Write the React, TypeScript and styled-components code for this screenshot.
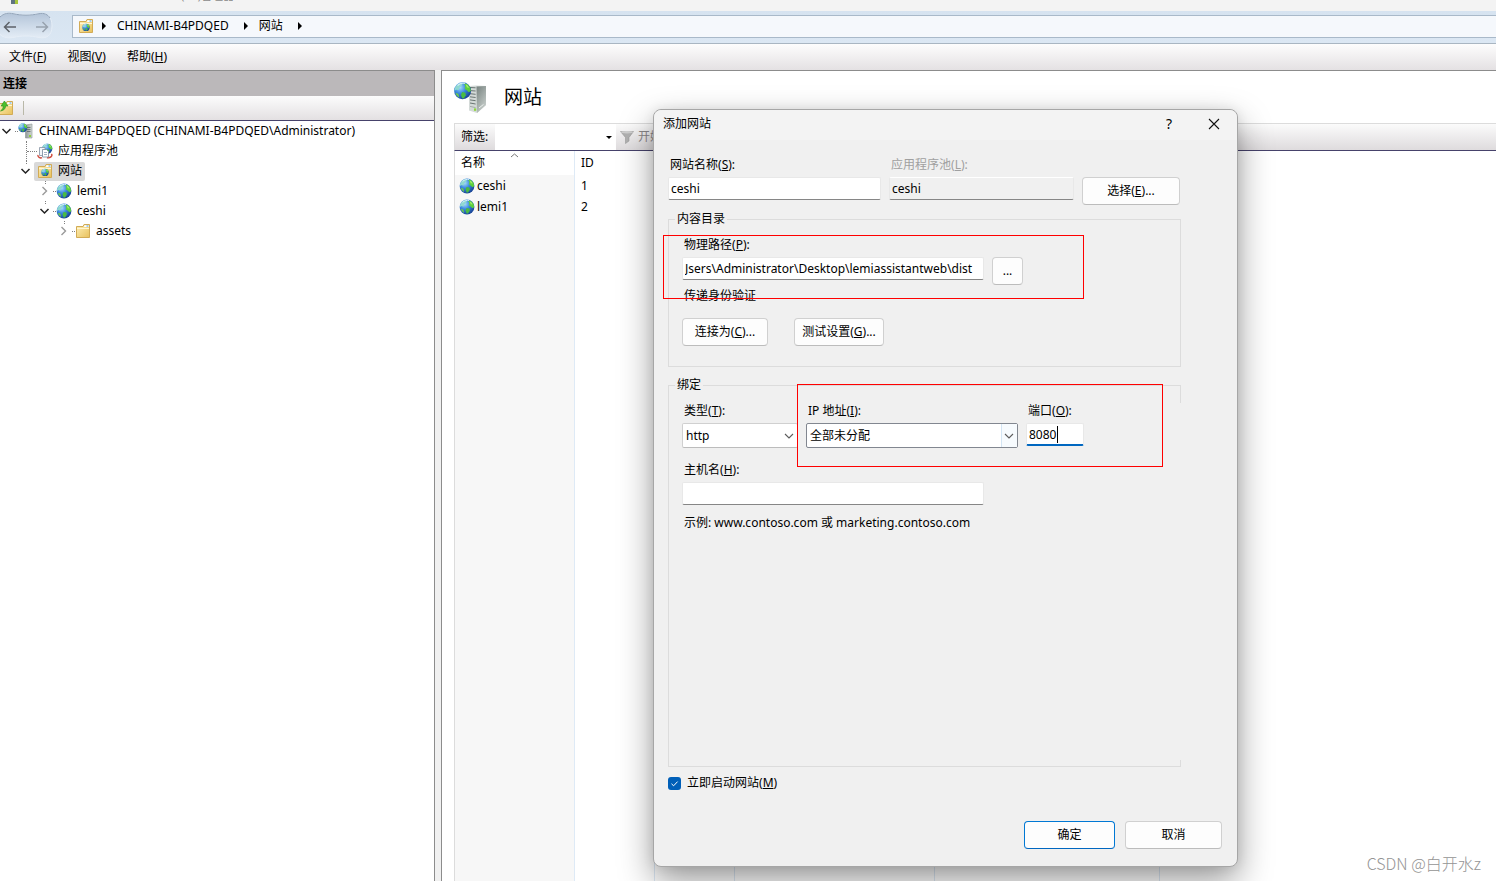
import React, { ReactNode } from "react";
import styled, { createGlobalStyle, css } from "styled-components";

const GlobalStyle = createGlobalStyle`
  * { box-sizing: border-box; }
  body {
    margin: 0;
    background: #fff;
    color: #000;
    font: 12px/16px "Noto Sans", "Noto Sans CJK SC", sans-serif;
  }
  button, input, select { font: inherit; color: inherit; margin: 0; }
  ul { list-style: none; margin: 0; padding: 0; }
  u { text-underline-offset: 1px; }
`;

/* ---------- window frame ---------- */

const Window = styled.div`
  position: relative;
  display: flex;
  flex-direction: column;
  height: 100vh;
  min-height: 880px;
  overflow: hidden;
`;

const TitleStrip = styled.header`
  display: flex;
  align-items: flex-end;
  gap: 8px;
  height: 11px;
  padding: 0 0 7px 11px;
  overflow: hidden;
  background: #f3f3f3;
  color: #8a8a8a;
  font-size: 11px;
`;

const AppMark = styled.span`
  width: 7px;
  height: 12px;
  background: linear-gradient(90deg, #5f7380 60%, #a5c53c 60%);
  flex: none;
`;

const AddressBar = styled.nav`
  display: flex;
  align-items: center;
  height: 33px;
  padding-bottom: 2px;
  background: linear-gradient(#d6e3f0, #dbe7f3);
  border-bottom: 1px solid #a9b6c2;
`;

const History = styled.div`
  display: flex;
  align-items: center;
  width: 72px;
  height: 30px;
  flex: none;
`;

const Breadcrumb = styled.div`
  flex: 1;
  display: flex;
  align-items: center;
  height: 23px;
  padding-left: 5px;
  background: #f5f8fc;
  border: 1px solid #a9b9c9;
  border-right: 0;
`;

const Crumb = styled.a`
  padding-right: 7px;
  color: #000;
  text-decoration: none;
`;

const CrumbArrow = styled.span`
  width: 0;
  height: 0;
  margin: 0 11px 0 8px;
  border: 4px solid transparent;
  border-left-color: #000;
  border-right-width: 0;
`;

const MenuBar = styled.div`
  display: flex;
  gap: 21px;
  align-items: center;
  height: 26px;
  padding-left: 9px;
  background: linear-gradient(#fdfdfd, #e4e1e3);
`;

const MenuItem = styled.button`
  padding: 0;
  border: 0;
  background: none;
`;

const Main = styled.div`
  flex: 1;
  min-height: 0;
  display: flex;
  gap: 6px;
  background: #f0f0f0;
`;

/* ---------- connections ---------- */

const Connections = styled.aside`
  display: flex;
  flex-direction: column;
  flex: 0 0 435px;
  background: #fff;
  border: 1px solid #8c8c8c;
  border-width: 1px 1px 0 0;
`;

const PanelHeading = styled.h2`
  margin: 0;
  padding: 5px 3px;
  font-size: 12px;
  line-height: 15px;
  background: #bbb8ba;
`;

const PanelTools = styled.div`
  display: flex;
  align-items: center;
  height: 25px;
  background: linear-gradient(#fcfcfc, #e3e0e2);
  border-bottom: 1px solid #46426b;
`;

const ToolButton = styled.button`
  display: flex;
  justify-content: flex-end;
  width: 14px;
  padding: 0;
  border: 0;
  background: none;
  overflow: hidden;
`;

const ToolDivider = styled.span`
  width: 1px;
  height: 14px;
  margin-left: 9px;
  background: #b9b8a8;
`;

const Branch = styled.ul<{ $root?: boolean }>`
  padding-left: ${(p) => (p.$root ? 0 : 19)}px;
`;

const Node = styled.li<{ $stub: number }>`
  position: relative;
  &::before {
    content: "";
    position: absolute;
    left: 7px;
    top: 0;
    height: ${(p) => p.$stub}px;
    border-left: 1px dotted #808080;
  }
`;

const NodeRow = styled.div`
  display: flex;
  align-items: center;
  height: 20px;
`;

const Expander = styled.span`
  display: flex;
  width: 15px;
  flex: none;
`;

const Dots = styled.span<{ $long?: boolean }>`
  width: ${(p) => (p.$long ? 10 : 3)}px;
  margin-left: ${(p) => (p.$long ? -7 : 0)}px;
  border-top: 1px dotted #808080;
`;

const NodeLabel = styled.span<{ $selected?: boolean }>`
  display: flex;
  align-items: center;
  gap: 5px;
  height: 19px;
  margin-left: -3px;
  padding: 0 3px;
  border-radius: 2px;
  white-space: nowrap;
  background: ${(p) => (p.$selected ? "#d9d9d9" : "transparent")};
`;

/* ---------- sites list ---------- */

const Sites = styled.main`
  flex: 1;
  min-width: 0;
  display: flex;
  flex-direction: column;
  padding-left: 12px;
  background: #fff;
  border: 1px solid #8c8c8c;
  border-width: 1px 0 0 1px;
`;

const SitesTitle = styled.h1`
  display: flex;
  align-items: center;
  gap: 17px;
  height: 52px;
  margin: 0;
  font-size: 19px;
  font-weight: 400;
`;

const FilterBar = styled.div`
  display: flex;
  align-items: stretch;
  height: 28px;
  background: linear-gradient(#fbfbfb, #dedbdd);
  border: 1px solid #dcdcdc;
  border-width: 1px 0 1px 1px;
  border-bottom-color: #46426b;
`;

const FilterLabel = styled.label`
  width: 40px;
  padding: 5px 0 0 6px;
`;

const Overlaid = styled.span<{ $width: number }>`
  display: grid;
  width: ${(p) => p.$width}px;
  & > * { grid-area: 1 / 1; }
  & > svg {
    justify-self: end;
    align-self: center;
    pointer-events: none;
  }
`;

const FilterSelect = styled.select`
  appearance: none;
  width: 100%;
  border: 0;
  background: #fff;
`;

const StartButton = styled.button`
  display: flex;
  align-items: center;
  gap: 4px;
  padding: 0 4px;
  border: 0;
  background: none;
  color: #8a8688;
`;

const ListArea = styled.div`
  flex: 1;
  min-height: 0;
  display: grid;
  border-left: 1px solid #dcdcdc;
`;

const SiteTable = styled.table`
  width: 100%;
  height: 100%;
  table-layout: fixed;
  border-collapse: separate;
  border-spacing: 0;
  th, td {
    padding: 0 6px;
    font-weight: 400;
    text-align: left;
    border-right: 1px solid #deeaf6;
  }
  th { height: 24px; }
  td { height: 21px; }
  td:first-child { padding-left: 4px; background: #f7f7f7; }
  th:last-child, td:last-child { border-right: 0; }
  tbody tr:last-child td { height: 100%; }
`;

const SortHead = styled.span`
  display: grid;
  align-items: center;
  & > * { grid-area: 1 / 1; }
  & > svg { justify-self: center; align-self: start; }
`;

const SiteName = styled.span`
  display: flex;
  align-items: center;
  gap: 2px;
`;

/* ---------- dialog ---------- */

const Dialog = styled.section`
  position: absolute;
  left: 653px;
  top: 109px;
  width: 585px;
  height: 758px;
  display: flex;
  flex-direction: column;
  background: #f0f0f0;
  border: 1px solid #a6a6a6;
  border-radius: 8px;
  box-shadow: 0 14px 34px rgba(0, 0, 0, 0.4), 0 0 12px rgba(0, 0, 0, 0.08);
`;

const DialogBar = styled.header`
  display: flex;
  align-items: center;
  height: 30px;
  padding: 0 16px 2px 9px;
  background: #f3f3f3;
  border-radius: 8px 8px 0 0;
`;

const DialogTitle = styled.h2`
  flex: 1;
  margin: 0;
  font-size: 12px;
  font-weight: 400;
`;

const CaptionButton = styled.button`
  display: flex;
  justify-content: center;
  align-items: center;
  width: 14px;
  margin-left: 31px;
  padding: 0;
  border: 0;
  background: none;
  font-size: 14px;
`;

const DialogForm = styled.form`
  flex: 1;
  display: flex;
  flex-direction: column;
  padding: 17px 15px 17px 14px;
`;

const Row = styled.div<{ $gap?: number; $top?: number }>`
  display: flex;
  align-items: flex-start;
  gap: ${(p) => p.$gap ?? 0}px;
  margin-top: ${(p) => p.$top ?? 0}px;
`;

const Field = styled.label<{ $muted?: boolean }>`
  display: flex;
  flex-direction: column;
  gap: 4px;
  & > span:first-child {
    padding-left: 2px;
    color: ${(p) => (p.$muted ? "#a0a0a0" : "#000")};
  }
`;

const TextBox = styled.input<{ $width: number; $active?: boolean }>`
  width: ${(p) => p.$width}px;
  height: 23px;
  padding: 0 2px;
  outline: 0;
  border: 1px solid #e8e8e8;
  border-bottom-color: #868686;
  border-radius: 2px;
  background: #fff;
  &:read-only { background: #f0f0f0; border-top-color: #fff; }
  ${(p) =>
    p.$active &&
    css`
      border-bottom: 2px solid #0067c0;
    `}
`;

const Caret = styled.i`
  align-self: center;
  width: 1px;
  height: 17px;
  margin-left: 31px;
  background: #000;
`;

const PushButton = styled.button<{ $width: number; $primary?: boolean; $besideField?: boolean }>`
  width: ${(p) => p.$width}px;
  height: 28px;
  margin-top: ${(p) => (p.$besideField ? 20 : 0)}px;
  padding: 0;
  border: 1px solid ${(p) => (p.$primary ? "#0078d4" : "#d0d0d0")};
  border-bottom-color: ${(p) => (p.$primary ? "#0067c0" : "#bcbcbc")};
  border-radius: 4px;
  background: #fdfdfd;
`;

const Group = styled.fieldset<{ $height: number }>`
  position: relative;
  width: 513px;
  height: ${(p) => p.$height}px;
  margin: 0;
  padding: 10px 0 0 13px;
  border: 1px solid #dcdcdc;
`;

const BindingGroup = styled(Group)`
  &::after {
    content: "";
    position: absolute;
    right: -1px;
    top: 10px;
    bottom: 6px;
    width: 1px;
    background: #f0f0f0;
  }
`;

const Legend = styled.legend`
  margin-left: -7px;
  padding: 0 2px;
`;

const Note = styled.span`
  padding-left: 2px;
`;

const Choice = styled.select<{ $strong?: boolean }>`
  appearance: none;
  width: 100%;
  height: 25px;
  padding: 0 3px;
  border: 1px solid ${(p) => (p.$strong ? "#828790" : "#d0d0d0")};
  border-bottom-color: ${(p) => (p.$strong ? "#828790" : "#bcbcbc")};
  border-radius: 2px;
  background: #fff;
`;

const CheckLabel = styled.label`
  display: flex;
  align-items: center;
  gap: 6px;
  margin-top: 8px;
`;

const CheckBox = styled.input`
  appearance: none;
  width: 13px;
  height: 13px;
  border-radius: 3px;
  background: #005fb8;
`;

const Actions = styled.footer`
  display: flex;
  justify-content: flex-end;
  gap: 10px;
  margin-top: auto;
`;

const Highlight = styled.div<{ $x: number; $y: number; $w: number; $h: number }>`
  position: absolute;
  left: ${(p) => p.$x}px;
  top: ${(p) => p.$y}px;
  width: ${(p) => p.$w}px;
  height: ${(p) => p.$h}px;
  border: 1px solid #f00;
  pointer-events: none;
`;

const Watermark = styled.div`
  position: absolute;
  right: 15px;
  bottom: 8px;
  color: #949494;
  font: 300 16px/20px "Noto Sans CJK SC", sans-serif;
`;

/* ---------- icons ---------- */

const Defs = () => (
  <svg width="0" height="0" style={{ position: "absolute" }} aria-hidden="true">
    <defs>
      <radialGradient id="sea" cx="0.35" cy="0.3" r="0.75">
        <stop offset="0" stopColor="#a5dcfb" />
        <stop offset="0.45" stopColor="#3c8ade" />
        <stop offset="1" stopColor="#153f92" />
      </radialGradient>
      <linearGradient id="paper" x1="0" y1="0" x2="1" y2="1">
        <stop offset="0" stopColor="#fff0b8" />
        <stop offset="1" stopColor="#e8c15c" />
      </linearGradient>
      <linearGradient id="steel" x1="0" y1="0" x2="1" y2="0">
        <stop offset="0" stopColor="#8e9896" />
        <stop offset="1" stopColor="#d5dad8" />
      </linearGradient>
      <linearGradient id="side" x1="0" y1="0" x2="0.6" y2="1">
        <stop offset="0" stopColor="#76817e" />
        <stop offset="1" stopColor="#c6cdca" />
      </linearGradient>
      <linearGradient id="pill" x1="0" y1="0" x2="0" y2="1">
        <stop offset="0" stopColor="#b3c4d8" />
        <stop offset="0.5" stopColor="#ccd9e8" />
        <stop offset="1" stopColor="#e4edf6" />
      </linearGradient>
    </defs>
  </svg>
);

const GlobeShape = () => (
  <>
    <circle cx="8" cy="8" r="7.4" fill="url(#sea)" />
    <path d="M2.6 3.6C4.4 1.4 6.6 1 8 1.6L7.2 3.6 5.2 5.4 4.6 7.4 2.4 7 1 8C0.9 6 1.6 4.8 2.6 3.6Z" fill="#8fd8d0" />
    <path d="M9 1.4L12.2 2.2 14.6 5 15.2 8.2 13.4 9.2 11.6 7.6 9.8 6.2 10.4 4Z" fill="#5ccf3e" />
    <path d="M10.6 2.4L12.4 3.4 13.6 5.4 11.8 5.2Z" fill="#a6ee6c" />
    <path d="M7.6 9L10.4 9.6 10.8 11.8 9 14.6 7.6 14.4 6.6 11.4Z" fill="#49bb42" />
    <path d="M1.8 10L4.2 10.6 5.2 13.8C3.6 13.2 2.4 11.8 1.8 10Z" fill="#6fce48" />
    <path d="M3.6 3.4C5.4 1.6 8 1 10.2 1.6" stroke="#e4f6ff" strokeWidth="1" fill="none" opacity="0.8" />
  </>
);

const Globe = () => (
  <svg width="16" height="16" viewBox="0 0 16 16"><GlobeShape /></svg>
);

const Folder = ({ globe, up }: { globe?: boolean; up?: boolean }) => (
  <svg width="16" height="16" viewBox="0 0 16 16" style={{ flex: "none" }}>
    <path d="M1.5 3.5H8L9 1.5H14.5V14.5H1.5Z" fill="url(#paper)" stroke="#d2ab55" />
    <path d="M9.5 2.2H14V4H9Z" fill="#fff" />
    <path d="M11.5 3H13.5" stroke="#4a9be0" />
    <path d="M2 5.5H14" stroke="#fff6d4" />
    {globe && <g transform="translate(4 5.4) scale(0.5)"><GlobeShape /></g>}
    {up && <path d="M2.5 11C5.4 10.6 7.6 9 7.6 6H10L6.4 1 3 6H5.2C5.2 8 4.5 9.5 2.5 11Z" fill="#4cc02c" stroke="#2c8c1c" strokeWidth="0.6" />}
  </svg>
);

const ServerSmall = () => (
  <svg width="16" height="16" viewBox="0 0 16 16">
    <path d="M7.5 2L14 1V15H7.5Z" fill="url(#steel)" stroke="#8b9593" strokeWidth="0.6" />
    <path d="M9 4.5H12.5M9 6.5H12.5M9 8.5H12.5" stroke="#5d6765" strokeWidth="0.8" />
    <g transform="scale(0.6)"><GlobeShape /></g>
    <rect x="11" y="12" width="2" height="2" fill="#8fd03c" />
  </svg>
);

const PoolIcon = () => (
  <svg width="16" height="16" viewBox="0 0 16 16">
    <g transform="translate(4.6 0) scale(0.7)"><GlobeShape /></g>
    <path d="M1 12C0.6 14 3 15.5 5 14.7M14.4 11C16 13 13 15.5 10 14.7" stroke="#cf4a3c" strokeWidth="1.4" fill="none" />
    <path d="M2.5 4.5H8V12.5H2.5Z" fill="#f4f7fa" stroke="#8492a2" strokeWidth="0.8" />
    <path d="M5.5 6.5H9.5L11.5 8.5V14H5.5Z" fill="#fff" stroke="#75869a" strokeWidth="0.8" />
    <path d="M7 9.5H10M7 11.5H10" stroke="#8fa0b4" strokeWidth="0.8" />
  </svg>
);

const ServerLarge = () => (
  <svg width="33" height="33" viewBox="0 0 33 33">
    <path d="M15 5L22 4.4 32 5V24L23 32 15 29.5Z" fill="#d4dad8" />
    <path d="M22.5 5.4L32 5V24L23 32Z" fill="url(#side)" />
    <path d="M16 6.5L21.6 6.8M16 9.6L21.6 10M16 12.7L21.6 13.3M16 15.8L21.6 16.5M16 18.9L21.6 19.7M16 22L21.6 23" stroke="#5d6966" strokeWidth="0.9" />
    <path d="M16 25.4L21.6 26.6" stroke="#98a19e" strokeWidth="0.8" />
    <rect x="20" y="27.4" width="2.2" height="2.4" fill="#8ed83a" />
    <path d="M25 27L29.5 23.4" stroke="#eef2f0" />
    <g transform="translate(-0.6 0.6) scale(1.15)"><GlobeShape /></g>
  </svg>
);

const HistoryArrows = () => (
  <svg width="54" height="30" viewBox="0 0 54 30">
    <path d="M-3 15C-3 4 5 1 13 2.5 22 4.5 30 4.5 39 2.5 47 1 52 6 52 15 52 25 46 28 39 26.5 30 24.5 22 24.5 13 26.5 5 28-3 25-3 15Z" fill="url(#pill)" stroke="#e6eef7" />
    <path d="M0 6C4 2 9 1.8 13 2.7 22 4.7 30 4.7 39 2.7 44 1.6 48 3.6 50 7" fill="none" stroke="#91a3b8" />
    <path d="M16 16H4.5M9.5 11L4.5 16 9.5 21" fill="none" stroke="#5d6269" strokeWidth="1.5" />
    <path d="M36 16H47.5M42.5 11L47.5 16 42.5 21" fill="none" stroke="#98a2ae" strokeWidth="1.5" />
  </svg>
);

const TreeArrow = ({ open }: { open?: boolean }) => (
  <svg width="13" height="12" viewBox="0 0 13 12">
    {open ? (
      <path d="M2.5 4L6.5 8 10.5 4" fill="none" stroke="#222" strokeWidth="1.5" />
    ) : (
      <path d="M4.5 2L8.5 6 4.5 10" fill="none" stroke="#9a9a9a" strokeWidth="1.4" />
    )}
  </svg>
);

const SelectArrow = ({ framed }: { framed?: boolean }) => (
  <svg width="17" height="25" viewBox="0 0 17 25">
    {framed && <path d="M0 1H16V24H0Z" fill="#f7fbfe" />}
    {framed && <path d="M0.5 1V24" stroke="#d3e5f4" />}
    <path d="M4 11L8 15 12 11" fill="none" stroke="#5c5c5c" strokeWidth="1.1" />
  </svg>
);

const MenuArrow = () => (
  <svg width="12" height="26" viewBox="0 0 12 26"><path d="M2 12H8L5 15Z" fill="#000" /></svg>
);

const Funnel = () => (
  <svg width="14" height="16" viewBox="0 0 14 16">
    <path d="M0.5 2.5H13.5L9 8.5V12L5.5 14.5V8.5Z" fill="#b0b0b0" stroke="#989898" strokeWidth="0.6" />
    <ellipse cx="7" cy="3.2" rx="6" ry="1.3" fill="#cfcfcf" />
  </svg>
);

/* ---------- tree ---------- */

type TreeItem = {
  name: string;
  icon: ReactNode;
  leaf?: boolean;
  selected?: boolean;
  children?: TreeItem[];
};

const tree: TreeItem[] = [
  {
    name: "CHINAMI-B4PDQED (CHINAMI-B4PDQED\\Administrator)",
    icon: <ServerSmall />,
    children: [
      { name: "应用程序池", icon: <PoolIcon />, leaf: true },
      {
        name: "网站",
        icon: <Folder globe />,
        selected: true,
        children: [
          { name: "lemi1", icon: <Globe /> },
          { name: "ceshi", icon: <Globe />, children: [{ name: "assets", icon: <Folder /> }] },
        ],
      },
    ],
  },
];

const Tree = ({ items, root }: { items: TreeItem[]; root?: boolean }) => (
  <Branch $root={root}>
    {items.map((item) => (
      <Node key={item.name} $stub={root ? 0 : item.leaf ? 20 : 3}>
        <NodeRow>
          <Expander>{!item.leaf && <TreeArrow open={!!item.children} />}</Expander>
          <Dots $long={item.leaf} />
          <NodeLabel $selected={item.selected}>
            {item.icon}
            {item.name}
          </NodeLabel>
        </NodeRow>
        {item.children && <Tree items={item.children} />}
      </Node>
    ))}
  </Branch>
);

const Key = ({ text, k, end = "" }: { text: string; k: string; end?: string }) => (
  <span>
    {text}(<u>{k}</u>){end}
  </span>
);

const sites = [
  { name: "ceshi", id: 1 },
  { name: "lemi1", id: 2 },
];

const emptyCells = [0, 1, 2, 3];

const AddSiteDialog = () => (
  <Dialog role="dialog" aria-label="添加网站">
    <DialogBar>
      <DialogTitle>添加网站</DialogTitle>
      <CaptionButton>?</CaptionButton>
      <CaptionButton aria-label="关闭">
        <svg width="12" height="12" viewBox="0 0 12 12">
          <path d="M1 1L11 11M11 1L1 11" stroke="#111" strokeWidth="1.1" />
        </svg>
      </CaptionButton>
    </DialogBar>
    <DialogForm onSubmit={(e) => e.preventDefault()}>
      <Row $gap={8}>
        <Field>
          <Key text="网站名称" k="S" end=":" />
          <TextBox $width={213} defaultValue="ceshi" />
        </Field>
        <Field $muted>
          <Key text="应用程序池" k="L" end=":" />
          <TextBox $width={185} value="ceshi" readOnly />
        </Field>
        <PushButton $width={98} $besideField type="button">
          <Key text="选择" k="E" end="..." />
        </PushButton>
      </Row>

      <Row $top={6}>
        <Group $height={156}>
          <Legend>内容目录</Legend>
          <Row $gap={8}>
            <Field>
              <Key text="物理路径" k="P" end=":" />
              <TextBox $width={302} defaultValue="Jsers\Administrator\Desktop\lemiassistantweb\dist" />
            </Field>
            <PushButton $width={31} $besideField type="button">...</PushButton>
          </Row>
          <Row $top={3}><Note>传递身份验证</Note></Row>
          <Row $gap={26} $top={14}>
            <PushButton $width={86} type="button"><Key text="连接为" k="C" end="..." /></PushButton>
            <PushButton $width={90} type="button"><Key text="测试设置" k="G" end="..." /></PushButton>
          </Row>
        </Group>
      </Row>

      <Row $top={10}>
        <BindingGroup $height={390}>
          <Legend>绑定</Legend>
          <Row $gap={8}>
            <Field>
              <Key text="类型" k="T" end=":" />
              <Overlaid $width={116}>
                <Choice defaultValue="http"><option>http</option></Choice>
                <SelectArrow />
              </Overlaid>
            </Field>
            <Field>
              <Key text="IP 地址" k="I" end=":" />
              <Overlaid $width={212}>
                <Choice $strong defaultValue="全部未分配"><option>全部未分配</option></Choice>
                <SelectArrow framed />
              </Overlaid>
            </Field>
            <Field>
              <Key text="端口" k="O" end=":" />
              <Overlaid $width={58}>
                <TextBox $width={58} $active defaultValue="8080" />
                <Caret />
              </Overlaid>
            </Field>
          </Row>
          <Row $top={14}>
            <Field>
              <Key text="主机名" k="H" end=":" />
              <TextBox $width={302} />
            </Field>
          </Row>
          <Row $top={10}><Note>示例: www.contoso.com 或 marketing.contoso.com</Note></Row>
        </BindingGroup>
      </Row>

      <CheckLabel>
        <Overlaid $width={13}>
          <CheckBox type="checkbox" defaultChecked />
          <svg width="13" height="13" viewBox="0 0 13 13">
            <path d="M3.5 6.8L5.6 8.8 9.6 4.6" fill="none" stroke="#fff" />
          </svg>
        </Overlaid>
        <Key text="立即启动网站" k="M" />
      </CheckLabel>

      <Actions>
        <PushButton $width={91} $primary>确定</PushButton>
        <PushButton $width={97} type="button">取消</PushButton>
      </Actions>
    </DialogForm>
    <Highlight $x={9} $y={125} $w={421} $h={64} />
    <Highlight $x={143} $y={274} $w={366} $h={83} />
  </Dialog>
);

export default function App() {
  return (
    <Window>
      <GlobalStyle />
      <Defs />
      <TitleStrip>
        <AppMark />
        <span>Internet Information Services (IIS)管理器</span>
      </TitleStrip>
      <AddressBar>
        <History><HistoryArrows /></History>
        <Breadcrumb>
          <Folder globe />
          <CrumbArrow />
          <Crumb href="#server">CHINAMI-B4PDQED</Crumb>
          <CrumbArrow />
          <Crumb href="#sites">网站</Crumb>
          <CrumbArrow />
        </Breadcrumb>
      </AddressBar>
      <MenuBar>
        <MenuItem><Key text="文件" k="F" /></MenuItem>
        <MenuItem><Key text="视图" k="V" /></MenuItem>
        <MenuItem><Key text="帮助" k="H" /></MenuItem>
      </MenuBar>
      <Main>
        <Connections>
          <PanelHeading>连接</PanelHeading>
          <PanelTools>
            <ToolButton aria-label="向上"><Folder up /></ToolButton>
            <ToolDivider />
          </PanelTools>
          <Tree items={tree} root />
        </Connections>
        <Sites>
          <SitesTitle>
            <ServerLarge />
            网站
          </SitesTitle>
          <FilterBar>
            <FilterLabel htmlFor="filter">筛选:</FilterLabel>
            <Overlaid $width={121}>
              <FilterSelect id="filter" />
              <MenuArrow />
            </Overlaid>
            <StartButton><Funnel />开始</StartButton>
          </FilterBar>
          <ListArea>
            <SiteTable>
              <colgroup>
                <col style={{ width: 120 }} />
                <col style={{ width: 80 }} />
                <col style={{ width: 80 }} />
                <col style={{ width: 200 }} />
                <col style={{ width: 225 }} />
                <col />
              </colgroup>
              <thead>
                <tr>
                  <th>
                    <SortHead>
                      <span>名称</span>
                      <svg width="9" height="20" viewBox="0 0 9 20">
                        <path d="M1 4L4.5 1 8 4" fill="none" stroke="#777" />
                      </svg>
                    </SortHead>
                  </th>
                  <th>ID</th>
                  {emptyCells.map((n) => <th key={n} />)}
                </tr>
              </thead>
              <tbody>
                {sites.map((site) => (
                  <tr key={site.id}>
                    <td><SiteName><Globe />{site.name}</SiteName></td>
                    <td>{site.id}</td>
                    {emptyCells.map((n) => <td key={n} />)}
                  </tr>
                ))}
                <tr>
                  <td />
                  <td />
                  {emptyCells.map((n) => <td key={n} />)}
                </tr>
              </tbody>
            </SiteTable>
          </ListArea>
        </Sites>
      </Main>
      <AddSiteDialog />
      <Watermark>CSDN @白开水z</Watermark>
    </Window>
  );
}
